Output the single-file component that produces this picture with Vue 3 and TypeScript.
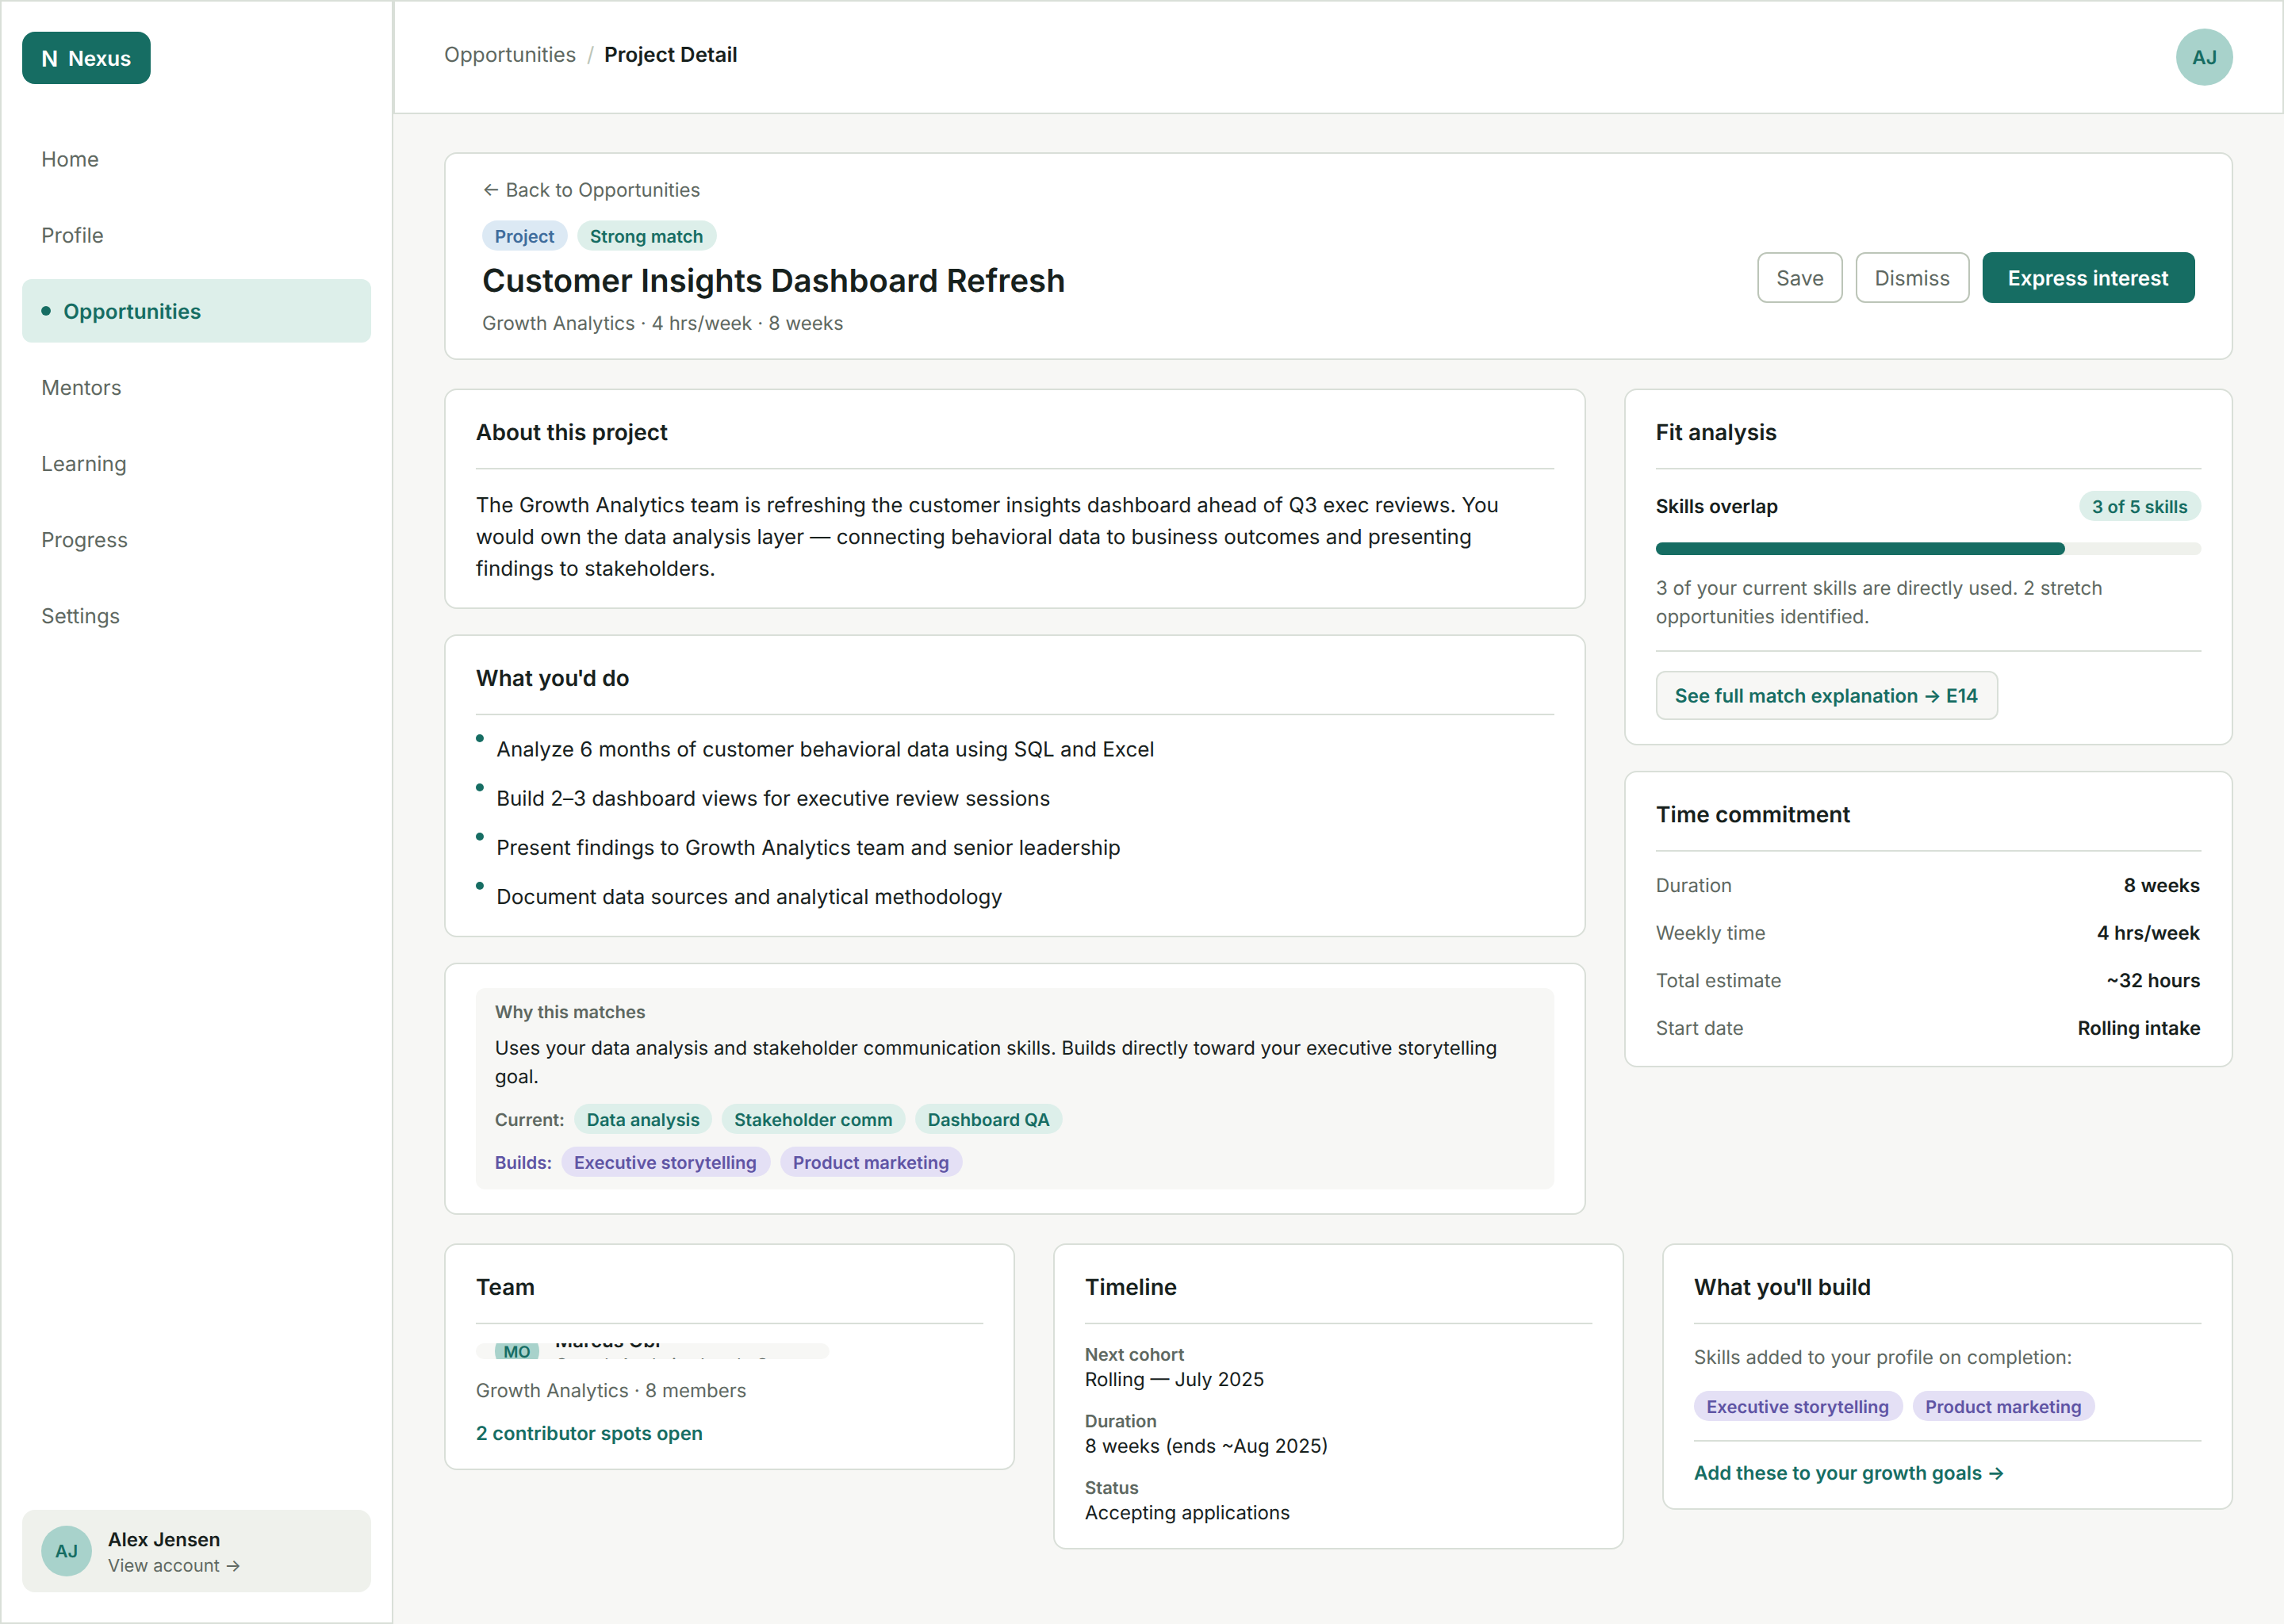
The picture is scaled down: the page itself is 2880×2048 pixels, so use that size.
<script setup lang="ts">
interface NavItem {
  label: string
  active?: boolean
}

interface Fact {
  label: string
  value: string
}

interface Skill {
  name: string
  width: number
}

const navItems: NavItem[] = [
  { label: 'Home' },
  { label: 'Profile' },
  { label: 'Opportunities', active: true },
  { label: 'Mentors' },
  { label: 'Learning' },
  { label: 'Progress' },
  { label: 'Settings' },
]

const duties: string[] = [
  'Analyze 6 months of customer behavioral data using SQL and Excel',
  'Build 2–3 dashboard views for executive review sessions',
  'Present findings to Growth Analytics team and senior leadership',
  'Document data sources and analytical methodology',
]

const currentSkills: Skill[] = [
  { name: 'Data analysis', width: 174 },
  { name: 'Stakeholder comm', width: 232 },
  { name: 'Dashboard QA', width: 186 },
]

const buildSkills: Skill[] = [
  { name: 'Executive storytelling', width: 264 },
  { name: 'Product marketing', width: 230 },
]

const commitment: Fact[] = [
  { label: 'Duration', value: '8 weeks' },
  { label: 'Weekly time', value: '4 hrs/week' },
  { label: 'Total estimate', value: '~32 hours' },
  { label: 'Start date', value: 'Rolling intake' },
]

const timeline: Fact[] = [
  { label: 'Next cohort', value: 'Rolling — July 2025' },
  { label: 'Duration', value: '8 weeks (ends ~Aug 2025)' },
  { label: 'Status', value: 'Accepting applications' },
]

const overlapPercent = 75

// Rounds a hugging element's width up to the 2px grid so its neighbours stay on whole steps.
const vSnap = {
  mounted(el: HTMLElement) {
    const width = el.getBoundingClientRect().width
    el.style.minWidth = `${Math.ceil((width - 0.05) / 2) * 2}px`
  },
}
</script>

<template>
  <div class="app">
    <aside class="sidebar">
      <div class="logo">
        <span v-snap class="logo-mark">N</span>
        <span v-snap class="logo-name">Nexus</span>
      </div>

      <nav class="nav">
        <a v-for="item in navItems" :key="item.label" class="nav-item" :class="{ active: item.active }">
          <span v-if="item.active" class="nav-dot"></span>
          <span class="nav-label">{{ item.label }}</span>
        </a>
      </nav>

      <div class="account">
        <div class="avatar avatar-md">AJ</div>
        <div class="stack">
          <span class="person-name">Alex Jensen</span>
          <span class="person-sub">View account →</span>
        </div>
      </div>
    </aside>

    <div class="page">
      <header class="topbar">
        <div class="crumbs">
          <span v-snap>Opportunities</span>
          <span v-snap class="crumb-sep">/</span>
          <span class="crumb-current">Project Detail</span>
        </div>
        <div class="avatar avatar-lg">AJ</div>
      </header>

      <main class="content">
        <section class="card hero">
          <a class="meta">← Back to Opportunities</a>
          <div class="hero-row">
            <div class="hero-info">
              <div class="tags">
                <span v-snap class="tag blue">Project</span>
                <span v-snap class="tag green">Strong match</span>
              </div>
              <h1>Customer Insights Dashboard Refresh</h1>
              <p class="meta">Growth Analytics · 4 hrs/week · 8 weeks</p>
            </div>
            <div class="actions">
              <button class="btn save">Save</button>
              <button v-snap class="btn">Dismiss</button>
              <button v-snap class="btn primary">Express interest</button>
            </div>
          </div>
        </section>

        <div class="columns">
          <div class="col-main">
            <section class="card">
              <h2>About this project</h2>
              <div class="divider"></div>
              <p class="about">
                The Growth Analytics team is refreshing the customer insights dashboard ahead of Q3 exec reviews. You
                would own the data analysis layer — connecting behavioral data to business outcomes and presenting
                findings to stakeholders.
              </p>
            </section>

            <section class="card">
              <h2>What you<span class="apos">'</span>d do</h2>
              <div class="divider"></div>
              <ul class="duties">
                <li v-for="duty in duties" :key="duty">
                  <span class="bullet"></span>
                  <span>{{ duty }}</span>
                </li>
              </ul>
            </section>

            <section class="card">
              <div class="why">
                <span class="label">Why this matches</span>
                <p class="why-text">
                  Uses your data analysis and stakeholder communication skills. Builds directly toward your executive
                  storytelling goal.
                </p>
                <div class="tags">
                  <span class="label current">Current:</span>
                  <span
                    v-for="skill in currentSkills"
                    :key="skill.name"
                    class="tag green"
                    :style="{ width: skill.width + 'px' }"
                  >{{ skill.name }}</span>
                </div>
                <div class="tags">
                  <span class="label builds">Builds:</span>
                  <span
                    v-for="skill in buildSkills"
                    :key="skill.name"
                    class="tag purple"
                    :style="{ width: skill.width + 'px' }"
                  >{{ skill.name }}</span>
                </div>
              </div>
            </section>
          </div>

          <div class="col-side">
            <section class="card">
              <h2>Fit analysis</h2>
              <div class="divider"></div>
              <div class="overlap">
                <span class="strong">Skills overlap</span>
                <span v-snap class="tag green">3 of 5 skills</span>
              </div>
              <div class="bar">
                <div class="bar-fill" :style="{ width: overlapPercent + '%' }"></div>
              </div>
              <p class="muted-text">
                3 of your current skills are directly used. 2 stretch opportunities identified.
              </p>
              <div class="divider"></div>
              <a v-snap class="match-link">See full match explanation → E14</a>
            </section>

            <section class="card">
              <h2>Time commitment</h2>
              <div class="divider"></div>
              <div class="facts">
                <div v-for="fact in commitment" :key="fact.label" class="fact">
                  <span>{{ fact.label }}</span>
                  <span v-snap class="strong">{{ fact.value }}</span>
                </div>
              </div>
            </section>
          </div>
        </div>

        <div class="bottom">
          <section class="card">
            <h2>Team</h2>
            <div class="divider"></div>
            <div class="member">
              <div class="avatar avatar-sm">MO</div>
              <div class="stack">
                <span class="person-name">Marcus Obi</span>
                <span class="person-sub">Growth Analytics Lead · Owner</span>
              </div>
            </div>
            <span class="meta">Growth Analytics · 8 members</span>
            <span class="link">2 contributor spots open</span>
          </section>

          <section class="card">
            <h2>Timeline</h2>
            <div class="divider"></div>
            <div v-for="entry in timeline" :key="entry.label" class="stack">
              <span class="label">{{ entry.label }}</span>
              <span class="entry-value">{{ entry.value }}</span>
            </div>
          </section>

          <section class="card">
            <h2>What you<span class="apos">'</span>ll build</h2>
            <div class="divider"></div>
            <p class="muted-text">Skills added to your profile on completion:</p>
            <div class="tags">
              <span
                v-for="skill in buildSkills"
                :key="skill.name"
                class="tag purple"
                :style="{ width: skill.width + 'px' }"
              >{{ skill.name }}</span>
            </div>
            <div class="divider"></div>
            <a class="link">Add these to your growth goals →</a>
          </section>
        </div>
      </main>
    </div>
  </div>
</template>

<style>
html,
body {
  margin: 0;
  background: #f7f7f5;
}
</style>

<style scoped>
.app,
.app * {
  box-sizing: border-box;
}

.app {
  display: flex;
  width: 2880px;
  height: 2048px;
  overflow: hidden;
  background: #f7f7f5;
  color: #17211d;
  font-family: Inter, "Liberation Sans", sans-serif;
  font-size: 24px;
  line-height: 30px;
  text-rendering: geometricPrecision;
}

h1,
h2,
p,
ul {
  margin: 0;
  padding: 0;
  list-style: none;
}

.sidebar {
  flex: none;
  display: flex;
  flex-direction: column;
  align-items: stretch;
  width: 496px;
  padding: 38px 26px;
  background: #fff;
  border: 2px solid #d9dfd8;
}

.logo {
  align-self: flex-start;
  display: flex;
  align-items: center;
  gap: 12px;
  height: 66px;
  padding: 2px 24px 0;
  border-radius: 16px;
  background: #166d63;
  color: #fff;
}

.logo-mark {
  font-size: 28px;
  font-weight: 600;
  line-height: 34px;
}

.logo-name {
  padding-top: 2px;
  font-size: 26px;
  font-weight: 600;
  line-height: 32px;
}

.nav {
  display: flex;
  flex-direction: column;
  gap: 16px;
  margin-top: 54px;
}

.nav-item {
  display: flex;
  align-items: center;
  gap: 16px;
  height: 80px;
  padding: 0 24px;
  border-radius: 12px;
  color: #5e6861;
  font-size: 26px;
  line-height: 32px;
}

.nav-label {
  padding-top: 4px;
}

.nav-item.active {
  background: #ddefea;
  color: #166d63;
  font-weight: 600;
  letter-spacing: 0.1px;
}

.nav-dot {
  width: 12px;
  height: 12px;
  border-radius: 50%;
  background: #166d63;
}

.account {
  display: flex;
  align-items: center;
  gap: 20px;
  height: 104px;
  margin-top: auto;
  padding: 0 24px;
  border-radius: 16px;
  background: #eff1ec;
}

.avatar {
  flex: none;
  display: flex;
  align-items: center;
  justify-content: center;
  padding-top: 2px;
  border-radius: 50%;
  background: #a8d2cb;
  color: #166d63;
  font-weight: 600;
}

.avatar-sm {
  width: 56px;
  height: 56px;
  font-size: 20px;
}

.avatar-md {
  width: 64px;
  height: 64px;
  font-size: 22px;
}

.avatar-lg {
  width: 72px;
  height: 72px;
  font-size: 24px;
}

.stack {
  display: flex;
  flex-direction: column;
  gap: 4px;
}

.person-name,
.entry-value,
.meta,
.link {
  height: 30px;
  line-height: 32px;
}

.person-name {
  font-weight: 600;
  white-space: nowrap;
}

.person-sub {
  height: 26px;
  color: #5e6861;
  font-size: 22px;
  line-height: 30px;
  white-space: nowrap;
}

.page {
  flex: 1;
  min-width: 0;
  display: flex;
  flex-direction: column;
}

.topbar {
  display: flex;
  align-items: center;
  justify-content: space-between;
  height: 144px;
  padding: 0 62px;
  background: #fff;
  border: 2px solid #d9dfd8;
}

.crumbs {
  display: flex;
  gap: 12px;
  margin-bottom: 4px;
  color: #5e6861;
  font-size: 26px;
  line-height: 32px;
}

.crumb-sep {
  color: #bcc5b8;
}

.crumb-current {
  color: #17211d;
  font-weight: 600;
  letter-spacing: 0.05px;
}

.content {
  display: flex;
  flex-direction: column;
  gap: 36px;
  padding: 48px 64px;
}

.card {
  display: flex;
  flex-direction: column;
  gap: 24px;
  padding: 30px 38px;
  background: #fff;
  border: 2px solid #d9dfd8;
  border-radius: 16px;
}

.hero {
  padding: 30px 46px;
}

.meta {
  color: #5e6861;
}

.hero-row {
  display: flex;
  align-items: center;
  justify-content: space-between;
}

.hero-info {
  display: flex;
  flex-direction: column;
  gap: 12px;
}

h1 {
  font-size: 40px;
  font-weight: 600;
  line-height: 52px;
  letter-spacing: 0.05px;
}

h2 {
  height: 44px;
  font-size: 28px;
  font-weight: 600;
  line-height: 46px;
  letter-spacing: 0.07px;
}

.apos {
  margin: 0 -2px;
}

.tags {
  display: flex;
  align-items: center;
  gap: 12px;
}

.tag {
  height: 38px;
  padding: 8px 16px 4px;
  border-radius: 19px;
  font-size: 22px;
  font-weight: 600;
  line-height: 26px;
  letter-spacing: 0.03px;
  white-space: nowrap;
}

.tag.blue {
  background: #dce9f4;
  color: #3f6c9c;
}

.tag.green {
  background: #ddefea;
  color: #166d63;
}

.tag.purple {
  background: #e4e0f5;
  color: #5f54a4;
}

.actions {
  display: flex;
  gap: 16px;
}

.btn {
  height: 64px;
  padding: 4px 22px 0;
  border: 2px solid #bcc5b8;
  border-radius: 12px;
  background: #fff;
  color: #5e6861;
  font-family: inherit;
  font-size: 26px;
  line-height: 32px;
  text-align: left;
  text-rendering: inherit;
  white-space: nowrap;
}

.btn.save {
  width: 108px;
}

.btn.primary {
  padding: 4px 32px 0;
  border: 0;
  background: #166d63;
  color: #fff;
  font-weight: 600;
}

.columns {
  display: flex;
  align-items: flex-start;
  gap: 48px;
}

.col-main,
.col-side {
  display: flex;
  flex-direction: column;
  gap: 32px;
}

.col-main {
  width: 1440px;
}

.col-side {
  width: 768px;
}

.divider {
  flex: none;
  height: 2px;
  background: #d9dfd8;
}

.about {
  height: 120px;
  padding-top: 2px;
  font-size: 26px;
  line-height: 40px;
}

.duties {
  display: flex;
  flex-direction: column;
  gap: 24px;
  font-size: 26px;
  line-height: 40px;
  letter-spacing: -0.01px;
}

.duties li {
  display: flex;
  gap: 16px;
  height: 38px;
}

.bullet {
  flex: none;
  width: 10px;
  height: 10px;
  border-radius: 50%;
  background: #166d63;
}

.why {
  display: flex;
  flex-direction: column;
  gap: 16px;
  padding: 16px 24px;
  border-radius: 12px;
  background: #f7f7f5;
}

.label {
  height: 26px;
  color: #5e6861;
  font-size: 22px;
  font-weight: 600;
  line-height: 30px;
  white-space: nowrap;
}

.label.current {
  width: 88px;
}

.label.builds {
  width: 72px;
  color: #5f54a4;
}

.why-text {
  line-height: 36px;
  letter-spacing: -0.01px;
}

.overlap {
  display: flex;
  align-items: center;
  justify-content: space-between;
  height: 44px;
}

.overlap .strong {
  padding-top: 2px;
}

.strong {
  color: #17211d;
  font-weight: 600;
}

.bar {
  height: 16px;
  border-radius: 8px;
  background: #eff1ec;
}

.bar-fill {
  height: 100%;
  border-radius: 8px;
  background: #166d63;
}

.muted-text {
  color: #5e6861;
  line-height: 36px;
}

.match-link {
  align-self: flex-start;
  padding: 15px 22px 13px;
  border: 2px solid #d9dfd8;
  border-radius: 12px;
  background: #f7f7f5;
  color: #166d63;
  font-weight: 600;
  letter-spacing: 0.04px;
}

.facts {
  display: flex;
  flex-direction: column;
  gap: 24px;
}

.fact {
  display: flex;
  justify-content: space-between;
  height: 36px;
  color: #5e6861;
  line-height: 38px;
}

.bottom {
  display: grid;
  grid-template-columns: repeat(3, 1fr);
  align-items: start;
  gap: 48px;
}

.member {
  align-self: flex-start;
  display: flex;
  align-items: center;
  gap: 20px;
  width: 446px;
  height: 20px;
  padding: 0 24px;
  overflow: hidden;
  border-radius: 10px;
  background: #f7f7f5;
}

.member .person-name {
  line-height: 34px;
}

.member .person-sub {
  line-height: 28px;
}

.link {
  color: #166d63;
  font-weight: 600;
  letter-spacing: 0.04px;
}
</style>
